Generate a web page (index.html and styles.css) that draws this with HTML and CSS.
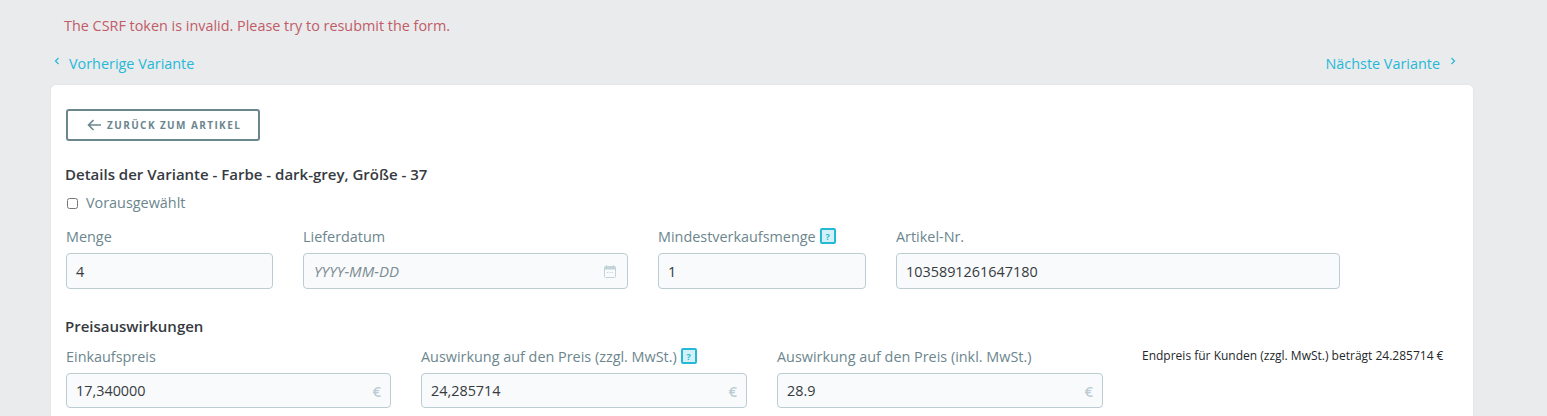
FILE: index.html
```html
<!DOCTYPE html>
<html lang="de">
<head>
<meta charset="utf-8">
<title>Variante</title>
<link rel="stylesheet" href="styles.css">
</head>
<body>
<div class="page">
  <p class="error">The CSRF token is invalid. Please try to resubmit the form.</p>
  <nav class="pager">
    <a class="pager-link"><svg class="chev chev-l" viewBox="0 0 6 8"><path d="M4.5 1 1.5 4l3 3"/></svg>Vorherige Variante</a>
    <a class="pager-link">Nächste Variante<svg class="chev chev-r" viewBox="0 0 6 8"><path d="M1.5 1l3 3-3 3"/></svg></a>
  </nav>
  <main class="card">
    <a class="back"><svg class="back-icon" viewBox="0 0 14 12"><path d="M14 6H1.5M6.5 1 1.5 6l5 5"/></svg>ZURÜCK ZUM ARTIKEL</a>
    <h2 class="title t1">Details der Variante - Farbe - dark-grey, Größe - 37</h2>
    <label class="check"><span class="box"></span>Vorausgewählt</label>
    <div class="row row1">
      <div class="field w207"><label class="lbl">Menge</label><div class="input">4</div></div>
      <div class="field w325"><label class="lbl">Lieferdatum</label><div class="input"><span class="ph">YYYY-MM-DD</span>
        <svg class="cal" viewBox="0 0 12 13"><path d="M2.5 0v2M9.5 0v2" class="cal-s"/><rect x=".5" y="1.5" width="11" height="11" rx="1" class="cal-s"/><path d="M.5 1.5h11v3H.5z" class="cal-f"/><path d="M3 7.5h1.2M5.4 7.5h1.2M7.8 7.5H9" class="cal-s"/></svg></div></div>
      <div class="field w208"><label class="lbl">Mindestverkaufsmenge<span class="help">?</span></label><div class="input">1</div></div>
      <div class="field w444"><label class="lbl">Artikel-Nr.</label><div class="input">1035891261647180</div></div>
    </div>
    <h2 class="title t2">Preisauswirkungen</h2>
    <div class="row row2">
      <div class="field w325"><label class="lbl">Einkaufspreis</label><div class="input input-short">17,340000<span class="eur">€</span></div></div>
      <div class="field w326"><label class="lbl">Auswirkung auf den Preis (zzgl. MwSt.)<span class="help">?</span></label><div class="input input-short">24,285714<span class="eur">€</span></div></div>
      <div class="field w326"><label class="lbl">Auswirkung auf den Preis (inkl. MwSt.)</label><div class="input input-short">28.9<span class="eur">€</span></div></div>
      <p class="final">Endpreis für Kunden (zzgl. MwSt.) beträgt 24.285714 €</p>
    </div>
  </main>
</div>
</body>
</html>
```
FILE: styles.css
```css
* { box-sizing: border-box; }
html, body { margin: 0; height: 416px; overflow: hidden; }
body { background: #eaebed; font-family: "Open Sans", sans-serif; font-size: 14.4px; color: #363a41; }
.page { padding: 0 74px 0 51px; }
.error { margin: 0; padding: 16px 0 0 13px; height: 51px; line-height: 20px; color: #c05c67; }
.pager { display: flex; justify-content: space-between; height: 34px; padding: 3px 17px 0 3px; line-height: 20px; }
.pager-link { display: flex; color: #25b9d7; align-items: flex-start; }
.chev { width: 6px; height: 8px; margin-top: 3px; fill: none; stroke: #25b9d7; stroke-width: 1.2; }
.chev-l { margin-right: 9px; }
.chev-r { margin-left: 10px; }
.card { background: #fff; border-radius: 5px 5px 0 0; padding: 24px 15px 0; height: 331px; box-shadow: 0 0 2px rgba(0,0,0,.08); }
.back { display: flex; align-items: center; width: 194px; height: 32px; border: 2px solid #6c868e; border-radius: 3px; padding-left: 19px; color: #6c868e; font-size: 10px; font-weight: 700; letter-spacing: 1.4px; }
.back-icon { width: 14px; height: 12px; margin-right: 6px; fill: none; stroke: #6c868e; stroke-width: 1.6; }
.title { margin: 0 0 0 -1px; font-size: 15px; font-weight: 600; line-height: 20px; color: #363a41; }
.t1 { margin-top: 23px; }
.t2 { margin-top: 27px; }
.check { display: flex; align-items: center; margin-top: 8px; height: 20px; color: #6c868e; }
.box { width: 11px; height: 11px; margin: 2px 8px 0 1px; border: 1px solid #767676; border-radius: 2.5px; background: #fff; }
.row { display: flex; gap: 30px; }
.row1 { margin-top: 15px; }
.row2 { margin-top: 11px; }
.field { flex: none; }
.w207 { width: 207px; }
.w208 { width: 208px; }
.w325 { width: 325px; }
.w326 { width: 326px; }
.w444 { width: 444px; }
.lbl { display: flex; align-items: center; height: 20px; margin: -1px 0 7px; color: #6c868e; white-space: nowrap; }
.input { display: flex; align-items: center; justify-content: space-between; height: 36px; padding: 0 9px; background: #f9fafc; border: 1px solid #bbcdd2; border-radius: 4px; color: #363a41; }
.input-short { height: 35px; }
.ph { font-style: italic; font-size: 15px; color: #7d8d92; margin-left: 1px; }
.cal { width: 12px; height: 13px; margin-right: 2px; }
.cal-s { fill: none; stroke: #c4d3d7; stroke-width: 1; }
.cal-f { fill: #c4d3d7; }
.eur { color: #bbcdd2; font-weight: 600; font-size: 15px; }
.help { display: flex; align-items: center; justify-content: center; width: 16px; height: 16px; margin-left: 4px; background: #d4f1f7; border: 2px solid #25b9d7; border-radius: 2px; color: #25b9d7; font-size: 9px; font-weight: 700; line-height: 1; }
.final { margin: -1px 0 0 9px; font-size: 12px; line-height: 20px; color: #23272b; white-space: nowrap; }
```
